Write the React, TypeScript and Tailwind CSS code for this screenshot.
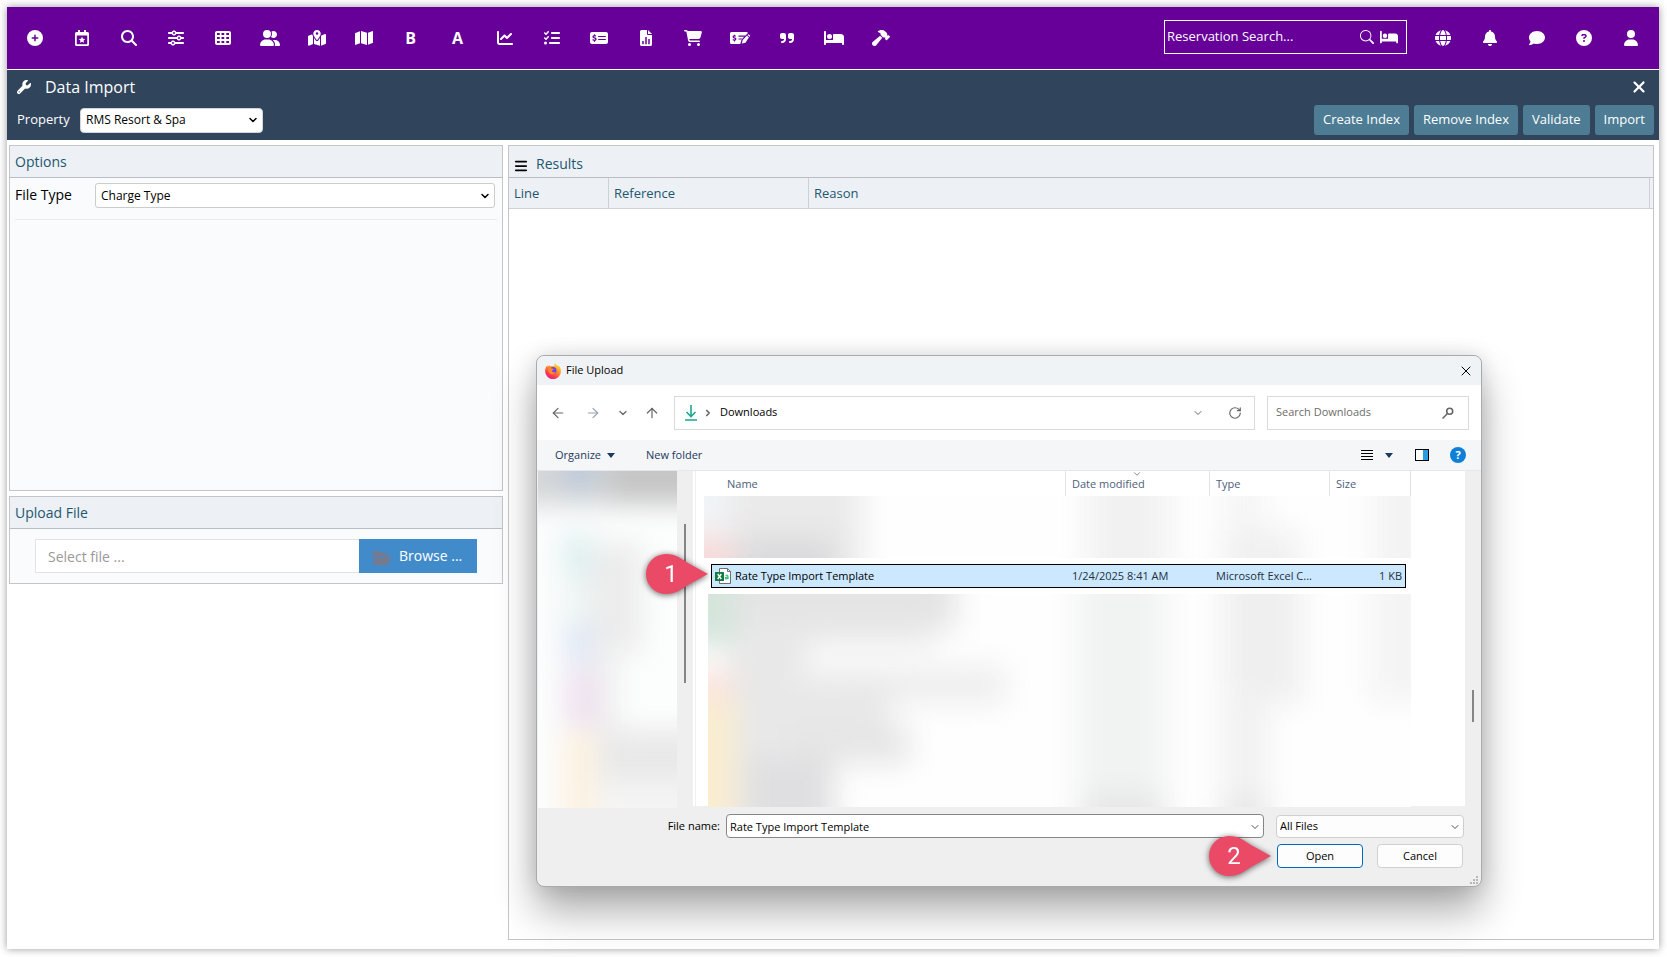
import React, { useState } from 'react';
import {
  FaBars,
  FaBed,
  FaBell,
  FaCartShopping,
  FaChartLine,
  FaCircleQuestion,
  FaComment,
  FaFolderOpen,
  FaGlobe,
  FaHammer,
  FaListCheck,
  FaMagnifyingGlass,
  FaMap,
  FaMapLocationDot,
  FaMoneyCheckDollar,
  FaCirclePlus,
  FaQuoteRight,
  FaSliders,
  FaTableCells,
  FaUser,
  FaUserGroup,
  FaWrench,
  FaXmark,
} from 'react-icons/fa6';
import { BsSearch } from 'react-icons/bs';
import { ArrowLeft, ArrowRight, ArrowUp, ChevronDown, ChevronRight, RotateCw, X } from 'lucide-react';

interface NavItem {
  label: string;
  icon: React.ReactNode;
}

function CalendarStarIcon() {
  return (
    <svg viewBox="0 0 448 512" className="h-4 w-[14px]" fill="currentColor" aria-hidden="true">
      <path
        fillRule="evenodd"
        d="M96 0h64v64h128V0h64v64h48a48 48 0 0 1 48 48v352a48 48 0 0 1-48 48H48a48 48 0 0 1-48-48V112a48 48 0 0 1 48-48h48zM56 176v280h336V176z"
      />
      <path d="M224 210l31 68 75 9-56 50 15 74-65-37-65 37 15-74-56-50 75-9z" />
    </svg>
  );
}

function FileChartIcon() {
  return (
    <svg viewBox="0 0 384 512" className="h-4 w-3" fill="currentColor" aria-hidden="true">
      <path
        fillRule="evenodd"
        d="M0 48A48 48 0 0 1 48 0h176v128a32 32 0 0 0 32 32h128v304a48 48 0 0 1-48 48H48a48 48 0 0 1-48-48zM72 352v104h48V352zM168 224v232h48V224zM264 288v168h48V288z"
      />
      <path d="M256 0v128h128z" />
    </svg>
  );
}

function MoneyCheckPenIcon() {
  return (
    <svg viewBox="0 0 640 512" className="h-4 w-5" fill="currentColor" aria-hidden="true">
      <path
        fillRule="evenodd"
        d="M0 112a48 48 0 0 1 48-48h480a48 48 0 0 1 46 34L430 240l-60 60-40 148H48a48 48 0 0 1-48-48zM272 176v36h180l36-36zM272 268v36h84l36-36zM128 148v22c-62 12-62 88 0 100 48 10 36 32 8 32-14 0-32-6-48-12v40c14 6 26 10 40 12v24h32v-24c62-12 62-88 0-100-46-12-34-32-8-32 14 0 26 4 36 8v-38c-10-4-18-8-28-10v-22z"
      />
      <path d="M563 160l58 58 12-12a30 30 0 0 0 0-42l-16-16a30 30 0 0 0-42 0zM545 178L406 317l-28 118 118-28 107-171z" />
    </svg>
  );
}

const navItems: NavItem[] = [
  { label: 'Add', icon: <FaCirclePlus /> },
  { label: 'Events', icon: <CalendarStarIcon /> },
  { label: 'Search', icon: <FaMagnifyingGlass /> },
  { label: 'Settings', icon: <FaSliders /> },
  { label: 'Grid', icon: <FaTableCells /> },
  { label: 'Guests', icon: <FaUserGroup className="h-4 w-5" /> },
  { label: 'Locations', icon: <FaMapLocationDot className="h-4 w-[18px]" /> },
  { label: 'Map', icon: <FaMap className="h-4 w-[18px]" /> },
  { label: 'Bookings', icon: <span className="text-base font-bold">B</span> },
  { label: 'Accounts', icon: <span className="text-base font-bold">A</span> },
  { label: 'Charts', icon: <FaChartLine /> },
  { label: 'Tasks', icon: <FaListCheck /> },
  { label: 'Payments', icon: <FaMoneyCheckDollar className="h-4 w-[18px]" /> },
  { label: 'Reports', icon: <FileChartIcon /> },
  { label: 'Sales', icon: <FaCartShopping className="h-4 w-[18px]" /> },
  { label: 'Edit payment', icon: <MoneyCheckPenIcon /> },
  { label: 'Quotes', icon: <FaQuoteRight /> },
  { label: 'Housekeeping', icon: <FaBed className="h-4 w-5" /> },
  { label: 'Maintenance', icon: <FaHammer className="h-4 w-[18px]" /> },
];

const userItems: NavItem[] = [
  { label: 'Language', icon: <FaGlobe /> },
  { label: 'Notifications', icon: <FaBell /> },
  { label: 'Messages', icon: <FaComment /> },
  { label: 'Help', icon: <FaCircleQuestion /> },
  { label: 'Profile', icon: <FaUser /> },
];

const actions = ['Create Index', 'Remove Index', 'Validate', 'Import'];

function NavButton({ item }: { item: NavItem }) {
  return (
    <button type="button" aria-label={item.label} className="flex h-10 w-[47px] items-center justify-center text-base text-white">
      {item.icon}
    </button>
  );
}

function TopBar() {
  return (
    <nav className="flex h-[62px] items-center justify-between bg-[#660099] pr-[5px] pl-1">
      <div className="flex">
        {navItems.map((item) => (
          <NavButton key={item.label} item={item} />
        ))}
      </div>
      <div className="flex items-center">
        <div className="mr-3 mb-0.5 flex h-[34px] w-[243px] items-center gap-[6px] border border-white pr-2 pl-0.5 text-white">
          <input
            type="text"
            aria-label="Reservation Search"
            placeholder="Reservation Search..."
            className="min-w-0 flex-1 bg-transparent text-[13px] text-white outline-none placeholder:text-white"
          />
          <BsSearch className="h-[14px] w-[14px]" />
          <FaBed className="h-4 w-[18px]" />
        </div>
        {userItems.map((item) => (
          <NavButton key={item.label} item={item} />
        ))}
      </div>
    </nav>
  );
}

function PageHeader() {
  return (
    <header className="mt-px flex h-[70px] flex-col bg-[#30455c] text-white">
      <div className="flex h-[34px] items-center pr-3 pl-[10px]">
        <FaWrench className="h-[14px] w-[14px]" />
        <h1 className="ml-[14px] flex-1 text-base">Data Import</h1>
        <button type="button" aria-label="Close" className="flex w-4 justify-center">
          <FaXmark className="h-[18px] w-[18px]" />
        </button>
      </div>
      <div className="flex h-8 items-center justify-between pr-[5px] pl-[10px]">
        <div className="flex items-center">
          <label htmlFor="property" className="w-[63px] text-[13px]">
            Property
          </label>
          <div className="relative">
            <select
              id="property"
              className="block h-[25px] w-[183px] appearance-none rounded border border-gray-300 bg-white px-[5px] text-xs text-black"
            >
              <option>RMS Resort &amp; Spa</option>
            </select>
            <ChevronDown className="pointer-events-none absolute top-[6px] right-1 h-3 w-3 text-black" strokeWidth={3} />
          </div>
        </div>
        <div className="flex gap-[5px]">
          {actions.map((action) => (
            <button key={action} type="button" className="h-[30px] rounded-[3px] bg-[#4d7c94] px-[9px] text-[13px]">
              {action}
            </button>
          ))}
        </div>
      </div>
    </header>
  );
}

function OptionsPanel() {
  return (
    <section className="h-[346px] border border-[#c3c5c8] bg-[#fafbfd]">
      <h2 className="flex h-8 items-center border-b border-[#b9bdc4] bg-[#edf1f6] px-[5px] pt-px text-sm text-[#23566f]">Options</h2>
      <div className="mr-[5px] ml-[5px] flex h-[42px] items-start border-b border-[#ebecee] pt-[5px]">
        <label htmlFor="file-type" className="w-20 shrink-0 pt-0.5 text-sm text-black">
          File Type
        </label>
        <div className="relative mr-0.5 flex-1">
          <select
            id="file-type"
            className="block h-[25px] w-full appearance-none rounded-[3px] border border-[#cccccc] bg-white px-[5px] text-xs text-black"
          >
            <option>Charge Type</option>
          </select>
          <ChevronDown className="pointer-events-none absolute top-[7px] right-1 h-3 w-3 text-black" strokeWidth={3} />
        </div>
      </div>
    </section>
  );
}

function UploadPanel() {
  return (
    <section className="border border-[#c3c5c8] bg-[#fafbfd]">
      <h2 className="flex h-8 items-center border-b border-[#b9bdc4] bg-[#edf1f6] px-[5px] pt-px text-sm text-[#23566f]">Upload File</h2>
      <div className="flex px-[25px] py-[10px]">
        <input
          type="text"
          aria-label="Select file"
          placeholder="Select file ..."
          className="h-[34px] min-w-0 flex-1 border border-r-0 border-[#e0e2e4] bg-white px-3 text-sm placeholder:text-[#999999]"
        />
        <button type="button" className="flex h-[34px] w-[118px] items-center bg-[#428bca] pl-[14px] text-sm text-white">
          <FaFolderOpen className="mt-1 h-4 w-[18px] text-[#777a8e]" />
          <span className="ml-2">Browse ...</span>
        </button>
      </div>
    </section>
  );
}

function ResultsPanel() {
  return (
    <section className="flex-1 border border-[#c3c5c8] bg-white">
      <h2 className="flex h-8 items-center border-b border-[#b9bdc4] bg-[#edf1f6] px-[5px] pt-1 text-sm text-[#23566f]">
        <FaBars className="mt-1 mr-2 h-[14px] w-[14px] text-black" />
        Results
      </h2>
      <table className="w-full table-fixed border-separate border-spacing-0 bg-[#edf1f6] text-left text-[13px] text-[#23566f]">
        <thead>
          <tr className="h-[31px]">
            <th className="w-[100px] border-r border-b border-[#cdd0d4] px-[5px] pt-0.5 font-normal">Line</th>
            <th className="w-[200px] border-r border-b border-[#cdd0d4] px-[5px] pt-0.5 font-normal">Reference</th>
            <th className="border-r border-b border-[#cdd0d4] px-[5px] pt-0.5 font-normal">Reason</th>
            <td className="w-[3px] border-b border-[#cdd0d4]" />
          </tr>
        </thead>
      </table>
    </section>
  );
}

function Callout({ value, className }: { value: number; className: string }) {
  return (
    <div className={`absolute flex h-10 w-[62px] items-center drop-shadow-[0_1px_3px_rgba(0,0,0,0.6)] ${className}`}>
      <svg viewBox="0 0 62 40" className="absolute inset-0 h-full w-full" aria-hidden="true">
        <path d="M20 0C30 0 36 5 42 9L62 20L42 31C36 35 30 40 20 40A20 20 0 0 1 20 0z" fill="#eb4a66" />
      </svg>
      <span className="relative w-[50px] text-center font-[Roboto,sans-serif] text-2xl text-white">{value}</span>
    </div>
  );
}

function FirefoxIcon() {
  return (
    <svg viewBox="0 0 16 16" className="h-4 w-4" aria-hidden="true">
      <defs>
        <linearGradient id="fox" x1="0.85" y1="0.05" x2="0.3" y2="1">
          <stop offset="0" stopColor="#ffe83c" />
          <stop offset="0.4" stopColor="#ff9626" />
          <stop offset="0.75" stopColor="#ff3d4c" />
          <stop offset="1" stopColor="#e3178f" />
        </linearGradient>
      </defs>
      <path d="M10.3 0c.4 1.700 1.500 2.200 2.500 2.800.5.300.9.200 1.200.200C15.300 4.500 16 6.300 16 8.200A7.900 7.900 0 0 1 .1 8.200C.1 5.600 1 3.600 2.200 2.500c0 .6.200 1 .4 1.200.7-1 1.500-1.500 2.100-1.800C4.700 2.600 5 3.200 5.500 3.300c1.500-.4 3-.3 4 .2C9.100 2.300 9.400.9 10.300 0z" fill="url(#fox)" />
      <circle cx="8" cy="7.600" r="3.500" fill="#7542e5" />
      <path d="M3.500 5.500C4.600 4.600 6.200 4.800 7 5.600l1.700.3c-.2.900-1.400 1-1.600 1.500-.3 1.500 1.700 2.600 3.600 1.400-.8 2.300-3 3-4.800 2.300C3.900 10.300 3 8 3.500 5.500z" fill="#ff8a2a" />
    </svg>
  );
}

function ExcelIcon() {
  return (
    <svg viewBox="0 0 16 16" className="h-4 w-4 shrink-0" aria-hidden="true">
      <path d="M4.500.5h8l3 3v12h-11z" fill="#fff" stroke="#6f6f6f" />
      <path d="M12.500.5v3h3" fill="none" stroke="#6f6f6f" />
      <rect y="4" width="9" height="9" rx="0.5" fill="#107c41" />
      <path d="M2.700 6l3.600 5M6.300 6l-3.600 5" stroke="#fff" strokeWidth="1.400" />
      <path d="M10.500 7.500q2.500-1 2.500 1v2.700M13 9.200q-2.700-.2-2.700 1t2.700.2" fill="none" stroke="#33c481" strokeWidth="1.200" />
    </svg>
  );
}

function DownloadIcon() {
  return (
    <svg viewBox="0 0 12 16" className="h-4 w-3" fill="none" stroke="#1aa890" strokeWidth="1.600" aria-hidden="true">
      <path d="M6 0v11M1.500 7L6 11.500 10.500 7M0 15h12" />
    </svg>
  );
}

// Blurred folder tree on the left of the dialog
function SidebarPreview() {
  return (
    <svg viewBox="0 0 139 337" preserveAspectRatio="none" className="block h-[337px] w-[139px] bg-[#fcfdfd]" aria-hidden="true">
      <defs>
        <filter id="side-blur" x="-50%" y="-50%" width="200%" height="200%" colorInterpolationFilters="sRGB">
          <feGaussianBlur stdDeviation="13" />
        </filter>
      </defs>
      <g filter="url(#side-blur)">
        <rect x="-60" y="-60" width="260" height="94" fill="#d4d6d8" />
        <rect x="70" y="-60" width="140" height="92" fill="#c6c6c6" />
        <rect x="28" y="-30" width="28" height="52" fill="#bccad9" />
        <rect x="52" y="72" width="52" height="110" fill="#ececec" />
        <rect x="24" y="62" width="30" height="44" fill="#dff0f0" />
        <rect x="24" y="106" width="30" height="46" fill="#eef5f4" />
        <rect x="26" y="152" width="32" height="42" fill="#e0e8f5" />
        <rect x="54" y="170" width="26" height="90" fill="#efefef" />
        <rect x="26" y="198" width="34" height="58" fill="#efe2f0" />
        <rect x="60" y="258" width="130" height="54" fill="#e9e9e9" />
        <rect x="24" y="260" width="34" height="120" fill="#fbf1e0" />
        <rect x="60" y="310" width="130" height="70" fill="#f4f4f4" />
      </g>
    </svg>
  );
}

// Blurred rows above the selected file
function RowsAbovePreview() {
  return (
    <svg viewBox="0 0 707 62" preserveAspectRatio="none" className="block h-[62px] w-full bg-[#fefefe]" aria-hidden="true">
      <defs>
        <filter id="above-blur" x="-20%" y="-60%" width="140%" height="220%" colorInterpolationFilters="sRGB">
          <feGaussianBlur stdDeviation="14" />
        </filter>
      </defs>
      <g filter="url(#above-blur)">
        <rect x="-60" y="-60" width="85" height="98" fill="#f1f4f6" />
        <rect x="25" y="-60" width="133" height="180" fill="#eaeaea" />
        <rect x="35" y="42" width="95" height="70" fill="#dadadc" />
        <rect x="-60" y="40" width="90" height="80" fill="#f7dada" />
        <rect x="383" y="-60" width="82" height="190" fill="#f1f1f1" />
        <rect x="520" y="-60" width="40" height="190" fill="#f5f5f5" />
        <rect x="520" y="34" width="75" height="90" fill="#f0f0f0" />
        <rect x="670" y="-60" width="100" height="190" fill="#f3f3f3" />
      </g>
    </svg>
  );
}

// Blurred rows below the selected file
function RowsBelowPreview() {
  return (
    <svg viewBox="0 0 703 213" preserveAspectRatio="none" className="block h-[213px] w-full bg-[#fefefe]" aria-hidden="true">
      <defs>
        <filter id="below-blur" x="-20%" y="-30%" width="140%" height="160%" colorInterpolationFilters="sRGB">
          <feGaussianBlur stdDeviation="14" />
        </filter>
      </defs>
      <g filter="url(#below-blur)">
        <rect x="20" y="-60" width="228" height="96" fill="#e4e4e4" />
        <rect x="20" y="28" width="205" height="24" fill="#e9e9e9" />
        <rect x="20" y="42" width="80" height="240" fill="#e8e8e8" />
        <rect x="85" y="72" width="212" height="38" fill="#eeeeee" />
        <rect x="70" y="90" width="112" height="80" fill="#e8e8e8" />
        <rect x="80" y="132" width="122" height="38" fill="#e6e6e6" />
        <rect x="40" y="165" width="86" height="100" fill="#dfdfe1" />
        <rect x="-60" y="-60" width="88" height="112" fill="#d5e5dc" />
        <rect x="-60" y="76" width="86" height="30" fill="#fae4de" />
        <rect x="-60" y="106" width="88" height="180" fill="#faedd0" />
        <rect x="370" y="-60" width="88" height="340" fill="#f1f2f2" />
        <rect x="375" y="200" width="80" height="80" fill="#e6e6e6" />
        <rect x="514" y="-60" width="80" height="170" fill="#efefef" />
        <rect x="514" y="90" width="46" height="190" fill="#f1f1f1" />
        <rect x="514" y="204" width="46" height="80" fill="#e6e6e6" />
        <rect x="662" y="-60" width="110" height="168" fill="#f4f4f4" />
      </g>
    </svg>
  );
}

function FileList() {
  const headClass = 'border-r border-[#dfe3e8] px-[6px] pt-0.5 font-normal';
  const cellClass = 'border-y border-black bg-[#cce8ff] px-[6px]';
  return (
    <table className="w-[707px] table-fixed border-separate border-spacing-0 text-left text-[11px]">
      <colgroup>
        <col className="w-[7px]" />
        <col className="w-[355px]" />
        <col className="w-[144px]" />
        <col className="w-[120px]" />
        <col className="w-[76px]" />
        <col className="w-[5px]" />
      </colgroup>
      <thead>
        <tr className="h-[25px] text-[#4c607a]">
          <td />
          <th className="border-r border-[#dfe3e8] pt-0.5 pl-4 font-normal">Name</th>
          <th className={headClass}>
            <div className="relative">
              Date modified
              <ChevronDown className="absolute -top-[7px] left-[60px] h-[10px] w-[10px] text-gray-500" />
            </div>
          </th>
          <th className={headClass}>Type</th>
          <th className="px-[6px] pt-0.5 font-normal">Size</th>
          <td className="border-r border-[#dfe3e8]" />
        </tr>
      </thead>
      <tbody>
        <tr>
          <td colSpan={6} className="pb-[6px]">
            <RowsAbovePreview />
          </td>
        </tr>
        <tr className="h-6 text-[#22303c]">
          <td />
          <td className="border border-r-0 border-black bg-[#cce8ff] pl-[3px] text-black">
            <div className="flex items-center gap-1">
              <ExcelIcon />
              Rate Type Import Template
            </div>
          </td>
          <td className={cellClass}>1/24/2025 8:41 AM</td>
          <td className={cellClass}>Microsoft Excel C...</td>
          <td className="border border-l-0 border-black bg-[#cce8ff] pr-[3px] text-right">1 KB</td>
          <td />
        </tr>
        <tr>
          <td colSpan={6} className="pt-[6px] pl-1">
            <RowsBelowPreview />
          </td>
        </tr>
      </tbody>
    </table>
  );
}

function FileDialog() {
  const [fileName, setFileName] = useState('Rate Type Import Template');

  return (
    <div
      role="dialog"
      aria-label="File Upload"
      className="absolute top-[348px] left-[529px] w-[946px] rounded-lg border border-[#a8abad] bg-[#efefef] text-[11px] text-black shadow-[0_24px_40px_rgba(0,0,0,0.33),0_0_20px_rgba(0,0,0,0.12)]"
    >
      {/* Title bar */}
      <div className="flex h-[29px] items-center rounded-t-lg bg-[#eff3f6] pr-[7px] pl-2">
        <FirefoxIcon />
        <span className="ml-[5px] flex-1">File Upload</span>
        <button type="button" aria-label="Close dialog">
          <X className="h-4 w-4" strokeWidth={1.5} />
        </button>
      </div>

      {/* Address bar */}
      <div className="flex h-[55px] items-center bg-white pr-3 pl-[13px] text-[#666666]">
        <button type="button" aria-label="Back">
          <ArrowLeft className="h-4 w-4" strokeWidth={1.8} />
        </button>
        <button type="button" aria-label="Forward" className="ml-[19px] text-gray-400">
          <ArrowRight className="h-4 w-4" strokeWidth={1.8} />
        </button>
        <button type="button" aria-label="Recent" className="ml-4">
          <ChevronDown className="h-3 w-3" strokeWidth={2.5} />
        </button>
        <button type="button" aria-label="Up" className="ml-[15px]">
          <ArrowUp className="h-4 w-4" strokeWidth={1.8} />
        </button>
        <div className="ml-[14px] flex h-[34px] flex-1 items-center border border-[#d9d9d9] pr-3 pl-[10px]">
          <DownloadIcon />
          <ChevronRight className="ml-[6px] h-[10px] w-[10px]" strokeWidth={4} />
          <span className="ml-[7px] flex-1 text-black">Downloads</span>
          <ChevronDown className="h-3 w-3" strokeWidth={2} />
          <RotateCw className="ml-6 h-[14px] w-[14px]" strokeWidth={2} />
        </div>
        <div className="ml-3 flex h-[34px] w-[202px] items-center border border-[#d9d9d9] px-2">
          <input
            type="text"
            aria-label="Search Downloads"
            placeholder="Search Downloads"
            className="min-w-0 flex-1 bg-transparent outline-none placeholder:text-[#6d6d6d]"
          />
          <svg viewBox="0 0 12 12" className="mr-[6px] h-3 w-3" fill="none" stroke="#666666" aria-hidden="true">
            <circle cx="7.700" cy="4.200" r="3" strokeWidth="1.600" />
            <path d="M5.500 6.500L.5 11.500" strokeWidth="1.500" />
          </svg>
        </div>
      </div>

      {/* Toolbar */}
      <div className="flex h-[31px] items-center border-b border-[#e4e7eb] bg-[#f4f6f8] pr-[15px] pl-[18px] text-[#1e395b]">
        <button type="button" className="flex items-center gap-[6px]">
          Organize
          <svg viewBox="0 0 8 5" className="h-[5px] w-2" aria-hidden="true">
            <path d="M0 0h8L4 5z" fill="currentColor" />
          </svg>
        </button>
        <button type="button" className="mr-auto ml-[31px]">
          New folder
        </button>
        <button type="button" aria-label="View" className="flex items-center gap-3">
          <svg viewBox="0 0 12 11" className="h-[11px] w-3" stroke="#000" aria-hidden="true">
            <path d="M0 .5h12M0 3.500h12M0 6.500h12M0 9.500h12" />
          </svg>
          <svg viewBox="0 0 8 5" className="h-[5px] w-2" aria-hidden="true">
            <path d="M0 0h8L4 5z" fill="currentColor" />
          </svg>
        </button>
        <button type="button" aria-label="Preview pane" className="ml-[22px]">
          <svg viewBox="0 0 14 12" className="h-3 w-[14px]" aria-hidden="true">
            <rect x="0.500" y="0.500" width="13" height="11" fill="#fff" stroke="#000" />
            <rect x="8" y="1" width="5" height="10" fill="#2b9be0" />
          </svg>
        </button>
        <button
          type="button"
          aria-label="Get help"
          className="ml-[21px] flex h-4 w-4 items-center justify-center rounded-full bg-[#0f80d7] font-bold text-white"
        >
          ?
        </button>
      </div>

      {/* Folder tree and file list */}
      <div className="flex h-[336px]">
        <div className="ml-px">
          <SidebarPreview />
        </div>
        <div className="flex w-4 justify-center pt-[53px]">
          <div className="h-[159px] w-0.5 bg-[#858585]" />
        </div>
        <div className="flex h-[335px] flex-1 bg-white">
          <div className="mr-2 ml-0.5 w-px bg-[#f0f0f0]" />
          <FileList />
        </div>
        <div className="flex w-4 justify-center pt-[219px]">
          <div className="h-8 w-0.5 bg-[#858585]" />
        </div>
      </div>

      {/* Footer */}
      <div className="flex flex-col gap-[6px] pt-[7px] pr-[17px] pb-[18px]">
        <div className="flex items-center">
          <label htmlFor="file-name" className="w-[189px] pr-[6px] text-right">
            File name:
          </label>
          <div className="relative flex-1">
            <input
              id="file-name"
              type="text"
              value={fileName}
              onChange={(e) => setFileName(e.target.value)}
              className="block h-6 w-full rounded-sm border border-[#868686] bg-white px-[3px]"
            />
            <ChevronDown className="pointer-events-none absolute top-[7px] right-[3px] h-3 w-3 text-gray-600" />
          </div>
          <div className="relative ml-3 w-[188px]">
            <select aria-label="File filter" className="block h-[23px] w-full appearance-none rounded-sm border border-[#cfcfcf] bg-[#fdfdfd] px-[3px]">
              <option>All Files</option>
            </select>
            <ChevronDown className="pointer-events-none absolute top-[6px] right-[3px] h-3 w-3 text-gray-600" />
          </div>
        </div>
        <div className="flex justify-end gap-[14px] pr-px">
          <button type="button" className="h-6 w-[86px] rounded border border-[#0067c0] bg-[#fdfdfd]">
            Open
          </button>
          <button type="button" className="h-6 w-[86px] rounded border border-[#d0d0d0] bg-[#fdfdfd]">
            Cancel
          </button>
        </div>
      </div>
      <svg viewBox="0 0 8 8" className="absolute right-[3px] bottom-[2px] h-2 w-2" fill="#b8b8b8" aria-hidden="true">
        <path d="M6 0h2v2H6zM3 3h2v2H3zM6 3h2v2H6zM0 6h2v2H0zM3 6h2v2H3zM6 6h2v2H6z" />
      </svg>

      <Callout value={1} className="top-[198px] left-[109px]" />
      <Callout value={2} className="top-[480px] left-[672px]" />
    </div>
  );
}

export default function App() {
  return (
    <div className="flex min-h-screen bg-white p-[7px] pr-2 pb-2 font-['Open_Sans','Noto_Sans',sans-serif]">
      <div className="relative flex flex-1 flex-col bg-white shadow-[0_0_8px_rgba(0,0,0,0.4)]">
        <TopBar />
        <PageHeader />
        <main className="flex flex-1 gap-[5px] pt-[5px] pr-[5px] pb-[9px] pl-0.5">
          <div className="flex w-[494px] shrink-0 flex-col gap-[5px]">
            <OptionsPanel />
            <UploadPanel />
          </div>
          <ResultsPanel />
        </main>
        <FileDialog />
      </div>
    </div>
  );
}
